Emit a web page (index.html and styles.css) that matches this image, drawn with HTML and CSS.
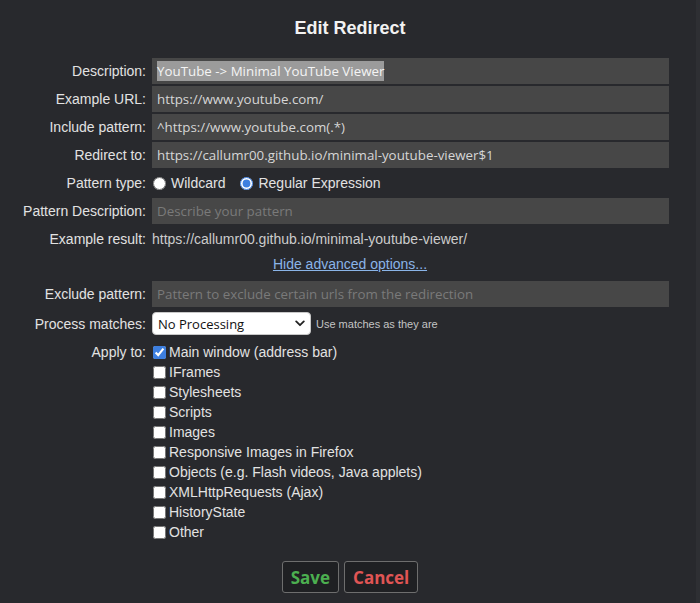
FILE: index.html
```html
<!DOCTYPE html>
<html>
<head>
<meta charset="utf-8">
<link rel="stylesheet" href="styles.css">
</head>
<body>
<div class="dialog">
  <h1 class="title">Edit Redirect</h1>
  <div class="form">
    <div class="row">
      <label class="lbl">Description:</label>
      <div class="field"><span class="sel">YouTube -&gt; Minimal YouTube Viewer</span></div>
    </div>
    <div class="row">
      <label class="lbl">Example URL:</label>
      <input class="field" type="text" value="https://www.youtube.com/">
    </div>
    <div class="row">
      <label class="lbl">Include pattern:</label>
      <input class="field" type="text" value="^https://www.youtube.com(.*)">
    </div>
    <div class="row">
      <label class="lbl">Redirect to:</label>
      <input class="field" type="text" value="https://callumr00.github.io/minimal-youtube-viewer$1">
    </div>
    <div class="row">
      <label class="lbl">Pattern type:</label>
      <div class="radios">
        <label class="opt"><input type="radio" name="pt"> Wildcard</label>
        <label class="opt"><input type="radio" name="pt" checked> Regular Expression</label>
      </div>
    </div>
    <div class="row">
      <label class="lbl">Pattern Description:</label>
      <input class="field" type="text" placeholder="Describe your pattern">
    </div>
    <div class="row">
      <label class="lbl">Example result:</label>
      <div class="result">https://callumr00.github.io/minimal-youtube-viewer/</div>
    </div>
    <div class="linkrow"><a href="#" class="adv">Hide advanced options...</a></div>
    <div class="row">
      <label class="lbl">Exclude pattern:</label>
      <input class="field" type="text" placeholder="Pattern to exclude certain urls from the redirection">
    </div>
    <div class="row process">
      <label class="lbl">Process matches:</label>
      <div class="selwrap">
        <div class="selbox">
          <select class="select"><option>No Processing</option></select>
          <svg class="chev" width="10" height="7" viewBox="0 0 10 7"><path d="M1.2 1.4 L5 5.2 L8.8 1.4" fill="none" stroke="#222" stroke-width="1.8" stroke-linecap="round" stroke-linejoin="round"/></svg>
        </div>
        <span class="hint">Use matches as they are</span>
      </div>
    </div>
    <div class="row apply">
      <label class="lbl">Apply to:</label>
      <div class="checks">
        <label class="chk"><input type="checkbox" checked>Main window (address bar)</label>
        <label class="chk"><input type="checkbox">IFrames</label>
        <label class="chk"><input type="checkbox">Stylesheets</label>
        <label class="chk"><input type="checkbox">Scripts</label>
        <label class="chk"><input type="checkbox">Images</label>
        <label class="chk"><input type="checkbox">Responsive Images in Firefox</label>
        <label class="chk"><input type="checkbox">Objects (e.g. Flash videos, Java applets)</label>
        <label class="chk"><input type="checkbox">XMLHttpRequests (Ajax)</label>
        <label class="chk"><input type="checkbox">HistoryState</label>
        <label class="chk"><input type="checkbox">Other</label>
      </div>
    </div>
  </div>
  <div class="buttons">
    <button class="btn save">Save</button>
    <button class="btn cancel">Cancel</button>
  </div>
</div>
</body>
</html>
```

FILE: styles.css
```css
html, body {
  margin: 0;
  padding: 0;
  background: #28292d;
}
body {
  width: 700px;
  height: 603px;
  overflow: hidden;
  font-family: "Liberation Sans", Arial, sans-serif;
  font-size: 14px;
  color: #e2e2e2;
}
.dialog {
  height: 603px;
  box-sizing: border-box;
  padding-top: 17px;
  border-right: 4px solid #2e2f33;
}
.title {
  margin: 0;
  text-align: center;
  font-size: 18px;
  line-height: 22px;
  font-weight: bold;
  color: #f2f2f2;
  padding-left: 4px;
}
.form {
  margin-top: 19px;
  display: flex;
  flex-direction: column;
  gap: 2px;
}
.row {
  display: flex;
  align-items: center;
  gap: 6px;
  min-height: 26px;
}
.lbl {
  width: 146px;
  flex: none;
  text-align: right;
  color: #e2e2e2;
}
.field {
  box-sizing: border-box;
  width: 517px;
  height: 26px;
  margin: 0;
  border: none;
  outline: none;
  background: #474747;
  color: #d6d6d6;
  font-family: "Open Sans", sans-serif;
  font-size: 13.33px;
  padding: 0 5px;
  display: flex;
  align-items: center;
}
.field::placeholder {
  color: #7a7a7a;
}
.sel {
  background: #9b9b9b;
  color: #f4f4f4;
  line-height: 20px;
}
.radios {
  display: flex;
  gap: 14px;
  align-items: center;
}
.opt {
  display: flex;
  align-items: center;
  gap: 5px;
}
.opt input {
  margin: 0 0 0 1px;
  width: 13px;
  height: 13px;
  accent-color: #3d7fe0;
}
.result {
  color: #cccccc;
}
.linkrow {
  height: 20px;
  display: flex;
  align-items: center;
  justify-content: center;
  margin-bottom: 5px;
  padding-left: 4px;
}
.adv {
  color: #8ab4e8;
  text-decoration: underline;
}
.process {
  height: 31px;
  align-items: center;
}
.process .lbl {
  position: relative;
  top: -1px;
}
.selwrap {
  display: flex;
  align-items: center;
  gap: 5px;
  position: relative;
  top: -1px;
}
.selbox {
  position: relative;
  width: 159px;
  height: 23px;
}
.select {
  appearance: none;
  -webkit-appearance: none;
  width: 159px;
  height: 23px;
  box-sizing: border-box;
  border: 1px solid #c8c8c8;
  border-radius: 4px;
  background: #ffffff;
  color: #111;
  font-family: "Open Sans", sans-serif;
  font-size: 13px;
  padding: 0 0 0 5px;
  margin: 0;
}
.chev {
  position: absolute;
  right: 6px;
  top: 8px;
  pointer-events: none;
}
.hint {
  font-size: 11px;
  color: #c4c4c4;
}
.apply {
  align-items: flex-start;
}
.apply .lbl {
  line-height: 20px;
}
.checks {
  display: flex;
  flex-direction: column;
}
.chk {
  display: flex;
  align-items: center;
  gap: 3px;
  height: 20px;
}
.chk input {
  margin: 0 0 0 1px;
  width: 13px;
  height: 13px;
  accent-color: #3d7fe0;
}
.buttons {
  display: flex;
  justify-content: center;
  gap: 5px;
  margin-top: 19px;
  padding-left: 4px;
}
.btn {
  background: #1f2023;
  border: 1px solid #6e6e6e;
  border-radius: 3px;
  font-family: "Open Sans", sans-serif;
  font-weight: bold;
  font-size: 17px;
  height: 32px;
  padding: 0 8px;
}
.save {
  color: #4caf50;
}
.cancel {
  color: #e05555;
}
```
